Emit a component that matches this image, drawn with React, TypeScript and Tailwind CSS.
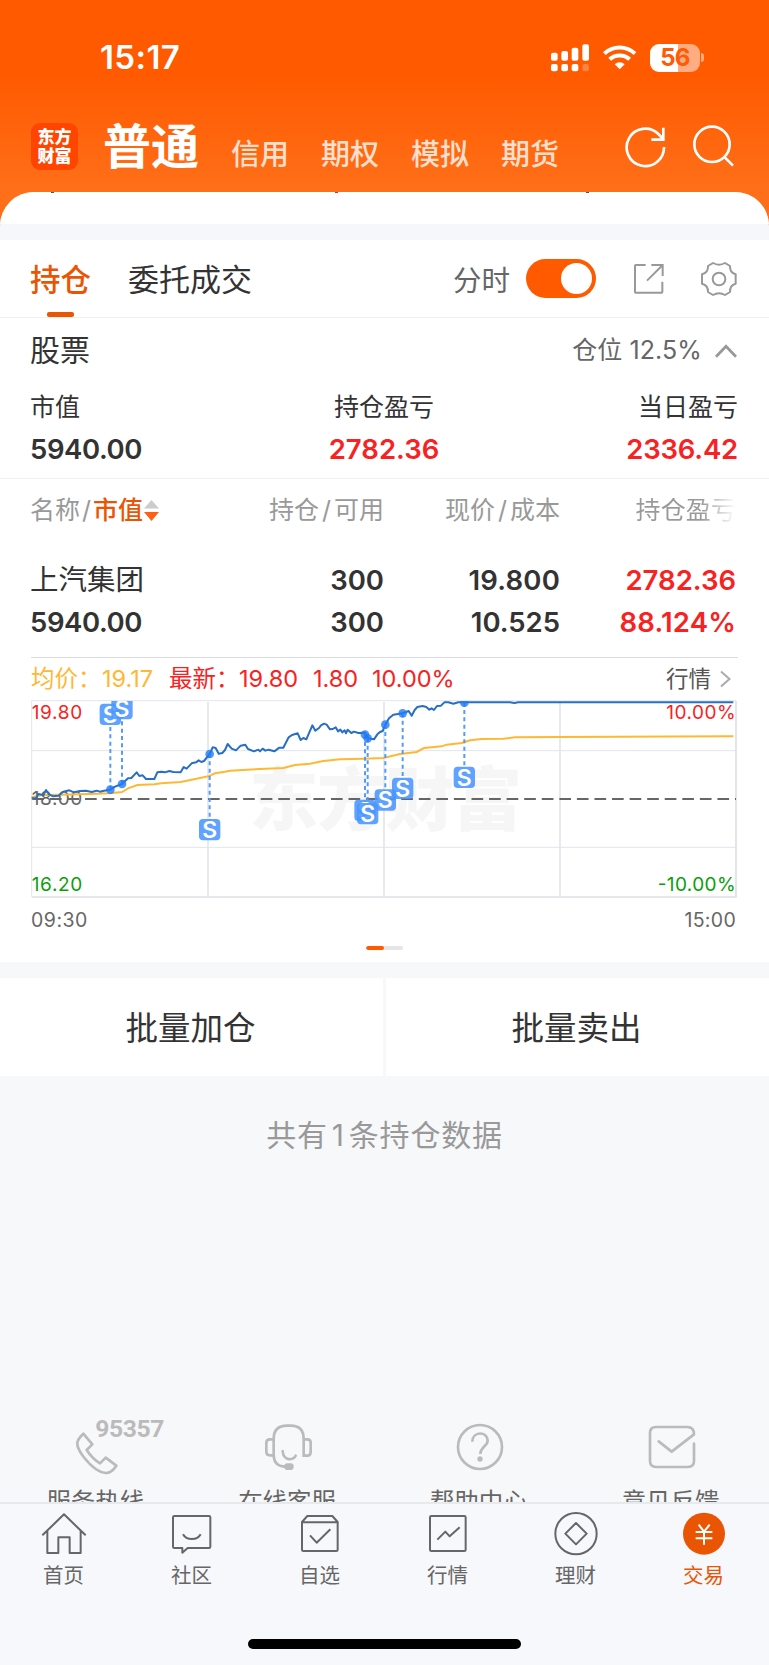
import React from "react";

interface Marker {
  x: number;
  dot: number;
  label: number;
}

const accountTabs = ["信用", "期权", "模拟", "期货"];

// chart units are thirds of a pixel
const priceLine =
  "95,325 108,325 115,312 130,316 138,300 147,313 160,319 175,317 190,305 208,301 222,307 240,303 258,302 275,306 290,302 300,305 312,302 331,299 345,290 366,282 384,265 394,264 410,247 418,258 428,256 438,267 463,267 472,247 484,245 495,247 508,243 520,246 542,247 551,231 560,236 575,220 588,217 596,211 604,216 612,213 629,192 638,172 647,174 656,191 667,189 675,180 683,162 695,176 708,181 722,167 736,164 744,177 762,184 775,179 780,184 788,176 796,182 806,179 823,184 838,173 850,173 866,142 876,135 893,130 902,150 910,144 919,148 937,106 946,122 957,114 963,106 972,101 980,104 990,118 998,117 1007,112 1014,124 1021,119 1027,127 1034,121 1038,130 1043,119 1054,129 1062,125 1075,129 1095,128 1104,145 1122,148 1132,133 1140,126 1148,123 1156,104 1167,85 1180,74 1208,70 1226,63 1235,77 1244,60 1252,51 1268,48 1279,51 1288,59 1295,55 1302,60 1311,48 1323,47 1333,37 1345,37 1360,41 1375,37 1530,37 1543,39 1555,37 2200,37";

const averageLine =
  "95,322 125,315 180,314 270,312 330,310 366,306 384,295 412,285 463,283 484,280 542,276 575,269 625,259 645,250 675,245 690,242 780,237 850,234 885,225 930,221 970,213 1020,208 1090,206 1150,204 1200,192 1250,186 1272,174 1325,169 1340,164 1385,159 1410,151 1445,147 1510,146 1545,142 1680,141 2200,139";

const markers: Marker[] = [
  { x: 331, dot: 299, label: 73 },
  { x: 366, dot: 282, label: 56 },
  { x: 629, dot: 192, label: 419 },
  { x: 1095, dot: 134, label: 361 },
  { x: 1103, dot: 145, label: 371 },
  { x: 1156, dot: 104, label: 330 },
  { x: 1208, dot: 70, label: 295 },
  { x: 1393, dot: 38, label: 262 },
];

const StatusBar = () => (
  <div className="flex h-[115px] items-center justify-between pl-[100px] pr-[65px] text-white">
    <span className="text-[33px] font-semibold leading-none tracking-[0.4px]">15:17</span>
    <div className="flex items-center">
      <svg className="h-[28px] w-[39px]" viewBox="0 0 117 84" fill="#fff">
        <rect x="0" y="26" width="20" height="24" rx="6" />
        <rect x="31" y="21" width="20" height="29" rx="6" />
        <rect x="62" y="11" width="20" height="39" rx="6" />
        <rect x="94" y="1" width="20" height="49" rx="6" />
        <rect x="0" y="60" width="20" height="22" rx="6" />
        <rect x="31" y="60" width="20" height="22" rx="6" />
        <rect x="62" y="60" width="20" height="22" rx="6" />
        <rect x="94" y="60" width="20" height="22" rx="6" opacity="0.25" />
      </svg>
      <svg className="ml-[13px] h-[25px] w-[34px]" viewBox="0 0 102 75" fill="none" stroke="#fff" strokeWidth="12">
        <path d="M4 26a67 67 0 0 1 92 0" />
        <path d="M20 43a44 44 0 0 1 60 0" />
        <path d="M50 73 35 58a22 22 0 0 1 30 0z" fill="#fff" stroke="none" />
      </svg>
      <div className="ml-[13px] flex items-center">
        <div className="flex h-[28px] w-[50px] items-center justify-center rounded-[9px] bg-[linear-gradient(90deg,#fff_56%,#ffac81_56%)]">
          <span className="text-[24px] font-bold leading-none tracking-[-0.8px] text-[#ff5a05]">56</span>
        </div>
        <div className="ml-px h-[9px] w-[3px] rounded-r-full bg-[#ffac81]" />
      </div>
    </div>
  </div>
);

const TopNav = () => (
  <div className="flex h-[77px] pl-[31px] text-white">
    <div className="mt-2 flex h-[47px] w-[47px] flex-col items-center justify-center rounded-[9px] bg-[#ff4500]">
      <span className="text-[17px] font-black leading-[19px]">东方</span>
      <span className="text-[17px] font-black leading-[19px]">财富</span>
    </div>
    <h1 className="ml-[25px] mt-2 text-[48px] font-bold leading-[48px]">普通</h1>
    <div className="ml-8 mt-[25px] flex gap-8 text-[29px] font-medium leading-[30px] text-[#ffe0cf]">
      {accountTabs.map((tab) => (
        <span key={tab}>{tab}</span>
      ))}
    </div>
    <svg className="ml-[65px] mt-[11px] h-[42px] w-[42px]" viewBox="717 378 126 126" fill="none" stroke="#fff" strokeWidth="8">
      {/* open ring, arrow head in the upper right corner */}
      <path d="M837 441a56 56 0 1 1-17-39l15 15" />
      <path d="M835 383v36h-36" />
    </svg>
    <svg className="ml-[26px] mt-[10px] h-[42px] w-[42px]" viewBox="922 375 126 126" fill="none" stroke="#fff" strokeWidth="8">
      <circle cx="982" cy="433" r="53" />
      <path d="M1018 470l27 27" />
    </svg>
  </div>
);

const HoldingTabs = () => (
  <div className="flex h-[78px] items-start border-b border-[#f0f0f0] bg-white pl-[30px]">
    <div className="flex h-[77px] flex-col items-center justify-between">
      <span className="mt-[25px] text-[30.5px] font-medium leading-[30px] text-[#ea5504]">持仓</span>
      <div className="h-[5px] w-[27px] rounded-[2px] bg-[#ea5504]" />
    </div>
    <span className="ml-[37px] mt-[25px] text-[31px] leading-[30px] text-[#333]">委托成交</span>
    <span className="ml-[201px] mt-[26px] text-[28.5px] leading-[30px] text-[#666]">分时</span>
    <div className="ml-4 mt-[19px] flex h-[39px] w-[70px] items-center justify-end rounded-full bg-[#ff5a00] pr-1">
      <div className="h-[31px] w-[31px] rounded-full bg-white" />
    </div>
    <svg className="ml-[37px] mt-[23px] h-[32px] w-[32px]" viewBox="744 69 96 96" fill="none" stroke="#999" strokeWidth="6">
      <path d="M782 75h-30a2 2 0 0 0-2 2v79a2 2 0 0 0 2 2h78a2 2 0 0 0 2-2v-31M799 75h34v33M833 75l-47 47" />
    </svg>
    <svg className="ml-[35px] mt-[21px] h-[36px] w-[38px]" viewBox="945 63 114 108" fill="none" stroke="#999" strokeWidth="6" strokeLinejoin="round">
      <circle cx="1002" cy="117" r="19" />
      <path d="M984 69Q1002 79 1020 69L1035 78Q1034 98 1052 103V131Q1034 136 1035 156L1020 165Q1002 155 984 165L969 156Q970 136 951 131V103Q970 98 969 78Z" />
    </svg>
  </div>
);

const Summary = () => (
  <div className="border-b border-[#f0f0f0] pl-[30px] pr-[31px] text-[#333]">
    <div className="flex h-[63px] items-center justify-between">
      <span className="text-[30px] leading-[30px]">股票</span>
      <div className="flex items-center pt-[2px] text-[25px] text-[#666]">
        <span className="tracking-[0.1px]">仓位 12.5%</span>
        <svg className="ml-[13px] mr-px h-[14px] w-[22px]" viewBox="0 0 23 14" fill="none" stroke="#999" strokeWidth="3">
          <path d="M1 13 11.500 2 22 13" />
        </svg>
      </div>
    </div>
    <div className="grid h-[97px] grid-cols-3 text-[25px]">
      <div className="flex flex-col items-start">
        <span className="mt-[14px] leading-[25px]">市值</span>
        <span className="mt-[15px] text-[27.5px] font-semibold leading-[28px] tracking-[-0.4px]">5940.00</span>
      </div>
      <div className="flex flex-col items-center">
        <span className="mt-[14px] leading-[25px]">持仓盈亏</span>
        <span className="mt-[15px] text-[27.5px] font-semibold leading-[28px] text-[#f82222]">2782.36</span>
      </div>
      <div className="flex flex-col items-end">
        <span className="mt-[14px] leading-[25px]">当日盈亏</span>
        <span className="mt-[15px] text-[27.5px] font-semibold leading-[28px] tracking-[-0.2px] text-[#f82222]">2336.42</span>
      </div>
    </div>
  </div>
);

const Position = () => (
  <div className="pl-[30px] pr-[33px]">
    <div className="grid h-[62px] grid-cols-[177px_177px_176px_1fr] items-center text-[25px] leading-[25px] text-[#999]">
      <div className="flex items-center">
        名称<span className="px-[2px]">/</span>
        <span className="font-medium text-[#ea5504]">市值</span>
        <svg className="ml-px h-[21px] w-[15px] shrink-0" viewBox="0 0 15 21">
          <path d="M0 8.500H15L7.500 0z" fill="#ccc" />
          <path d="M0 12H15L7.500 21z" fill="#ff5f10" />
        </svg>
      </div>
      <span className="text-right">持仓<span className="px-[3px]">/</span>可用</span>
      <span className="text-right">现价<span className="px-[3px]">/</span>成本</span>
      <span className="bg-[linear-gradient(90deg,#999_80%,#fff)] bg-clip-text text-right tracking-[0.1px] text-transparent">持仓盈亏</span>
    </div>
    <div className="grid h-[116px] grid-cols-[177px_177px_176px_1fr] content-start gap-y-[14px] pt-[25px] text-right text-[27.5px] font-semibold leading-[28px] text-[#333]">
      <span className="text-left text-[28.5px] font-normal">上汽集团</span>
      <span>300</span>
      <span className="tracking-[0.2px]">19.800</span>
      <span className="text-[#f82222]">2782.36</span>
      <span className="text-left tracking-[-0.4px]">5940.00</span>
      <span>300</span>
      <span>10.525</span>
      <span className="tracking-[0.2px] text-[#f82222]">88.124%</span>
    </div>
  </div>
);

const Chart = () => (
  <svg className="block h-[199px] w-[706px]" viewBox="93 30 2118 597">
    <defs>
      <clipPath id="plot">
        <rect x="93" y="33" width="2118" height="594" />
      </clipPath>
    </defs>
    <g stroke="#e1e5ee" fill="none">
      <path d="M95 182H2208M95 472H2208" strokeWidth="3" />
      <path d="M624 36V617M1152 36V617M1680 36V617" strokeWidth="5" />
      <path d="M95 620V32H2208" strokeWidth="3" />
      <path d="M95 621H2208V32" stroke="#dce1e8" strokeWidth="5" />
    </g>
    <text x="748" y="405" textLength="818" fontSize="207" fontWeight="900" fill="#f6f6f6">东方财富</text>
    <path d="M97 327H2208" stroke="#666" strokeWidth="6" strokeDasharray="35 17.700" />
    <g fontSize="57">
      <text x="95" y="87" textLength="152" fill="#f82222">19.80</text>
      <text x="95" y="346" textLength="152" fill="#666">18.00</text>
      <text x="95" y="602" textLength="152" fill="#0a9e0a">16.20</text>
      <text x="2207" y="87" textAnchor="end" textLength="208" fill="#f82222">10.00%</text>
      <text x="2207" y="602" textAnchor="end" textLength="234" fill="#0a9e0a">-10.00%</text>
    </g>
    <g clipPath="url(#plot)">
      <polyline points={averageLine} fill="none" stroke="#ffb833" strokeWidth="6" />
      <polyline points={priceLine} fill="none" stroke="#286fc4" strokeWidth="6" strokeLinejoin="round" />
      {markers.map((m) => (
        <g key={m.x}>
          <path d={`M${m.x} ${m.dot}V${m.label}`} stroke="#559bf5" strokeWidth="6" strokeDasharray="12 10" />
          <circle cx={m.x} cy={m.dot} r="13" fill="#1f7bf7" fillOpacity="0.8" />
          <rect x={m.x - 32} y={m.label - 32} width="64" height="64" rx="12" fill="#4a95ff" fillOpacity="0.88" />
          <text x={m.x} y={m.label + 25} textAnchor="middle" fontSize="69" fontWeight="600" fill="#fff">S</text>
        </g>
      ))}
    </g>
  </svg>
);

const ChartPanel = () => (
  <div className="mx-[31px] h-[305px] border-t border-[#ddd]">
    <div className="flex h-[42px] items-center whitespace-nowrap text-[23.5px] leading-[24px] text-[#f82222]">
      <span className="w-[71px] text-[#ffb833]">均价：</span>
      <span className="w-[67px] text-[#ffb833]">19.17</span>
      <span className="w-[70px]">最新：</span>
      <span className="w-[74px]">19.80</span>
      <span className="w-[59px]">1.80</span>
      <span>10.00%</span>
      <span className="ml-auto text-[22.5px] text-[#555]">行情</span>
      <svg className="ml-[9px] mr-[7px] h-[18px] w-[11px]" viewBox="0 0 11 18" fill="none" stroke="#aaa" strokeWidth="2">
        <path d="M1 1.500 9.500 9 1 16.500" />
      </svg>
    </div>
    <Chart />
    <div className="flex h-[44px] items-center justify-between pr-[2px] text-[19.5px] text-[#666]">
      <span className="tracking-[0.5px]">09:30</span>
      <span className="tracking-[0.3px]">15:00</span>
    </div>
    <div className="mx-auto mt-[3px] flex h-[4px] w-[37px] overflow-hidden rounded-full bg-[#e5e5e5]">
      <div className="w-[18px] rounded-full bg-[#ff5a00]" />
    </div>
  </div>
);

const services = [
  {
    name: "服务热线",
    icon: (
      <svg className="ml-[75px] h-[58px] w-[92px]" viewBox="225 55 276 174" fill="none" stroke="#bbb" strokeWidth="8" strokeLinejoin="round">
        <path d="M250 102 L277 134 L260 151 Q277 177 300 191 L317 174 L349 198 Q335 220 318 220 Q287 218 251 172 Q230 145 232 128 Q235 116 250 102Z" />
        <text x="286" y="113" textLength="207" fontSize="74" fontWeight="700" fill="#bbb" stroke="none" className="font-['Roboto',sans-serif]">95357</text>
      </svg>
    ),
  },
  {
    name: "在线客服",
    icon: (
      <svg className="ml-[72px] h-[58px] w-[50px]" viewBox="792 55 150 174" fill="none" stroke="#bbb" strokeWidth="8">
        <path d="M821 166V118Q821 78 861 78H872Q911 78 911 118V168H922Q932 168 932 158V129Q932 119 922 119H911M821 119H810Q799 119 799 130V157Q799 167 810 167H821Q822 201 857 201" />
        <path d="M848 154C850 184 880 184 887 168" strokeLinecap="round" />
        <rect x="853" y="191" width="28" height="20" rx="9" fill="#bbb" stroke="none" />
      </svg>
    ),
  },
  {
    name: "帮助中心",
    icon: (
      <svg className="ml-[71px] h-[58px] w-[50px]" viewBox="210 55 150 174" fill="none" stroke="#bbb" strokeWidth="8">
        <circle cx="285" cy="142" r="66" />
        <path d="M262 126C262 94 308 94 308 123C308 139 286 141 286 163" />
        <circle cx="285" cy="178" r="8" fill="#bbb" stroke="none" />
      </svg>
    ),
  },
  {
    name: "意见反馈",
    icon: (
      <svg className="ml-[72px] h-[58px] w-[50px]" viewBox="787 55 150 174" fill="none" stroke="#bbb" strokeWidth="8" strokeLinejoin="round">
        <path d="M928 132V184Q928 202 910 202H814Q796 202 796 184V100Q796 82 814 82H908Q928 82 928 104L861 156 822 125" strokeLinecap="round" />
      </svg>
    ),
  },
];

const Services = () => (
  <div className="grid h-[84px] w-[767px] grid-cols-4 overflow-hidden">
    {services.map((s) => (
      <div key={s.name}>
        {s.icon}
        <p className="mt-[14px] pr-px text-center text-[24.5px] leading-[25px] text-[#666]">{s.name}</p>
      </div>
    ))}
  </div>
);

const bottomTabs = [
  {
    name: "首页",
    icon: <path d="M-65 4 0-59 65 4M-50-9V57H-17V10H17V57H50V-9" />,
  },
  {
    name: "社区",
    icon: (
      <>
        <path d="M-53-54H51Q55-54 55-50V38Q55 42 51 42H-13L-29 56V42H-53Q-57 42-57 38V-50Q-57-54-53-54Z" />
        <path d="M-27 1C-17 20 16 20 26 1" />
      </>
    ),
  },
  {
    name: "自选",
    icon: <path d="M-54-36-38-54H37L53-36V47Q53 51 49 51H-50Q-54 51-54 47ZM-54-35H53M-30 4-10 26 31-14" />,
  },
  {
    name: "行情",
    icon: <path d="M-50-54H49Q53-54 53-50V47Q53 51 49 51H-50Q-54 51-54 47V-50Q-54-54-50-54ZM-32 17-8-7 5 7 35-20" />,
  },
  {
    name: "理财",
    icon: (
      <>
        <circle cx="0" cy="-1" r="62" />
        <path d="M0-33 32-1 0 31-32-1Z" />
      </>
    ),
  },
  {
    name: "交易",
    active: true,
    icon: (
      <>
        <circle cx="0" cy="-1" r="63" fill="#ea5504" stroke="none" />
        <path d="M-16-28 0-7 17-28M0-7V32M-25-6H25M-25 13H25" stroke="#fff" />
      </>
    ),
  },
];

const BottomBar = () => (
  <nav className="flex h-[163px] flex-col items-center border-t-2 border-[#e8e9ec] bg-[#f7f8fb]">
    <div className="grid w-[768px] grid-cols-6 self-start">
      {bottomTabs.map((tab) => (
        <div key={tab.name} className="flex flex-col items-center pt-[7px]">
          <svg className="h-[46px] w-[46px]" viewBox="-69 -69 138 138" fill="none" stroke="#666" strokeWidth="6" strokeLinejoin="round">
            {tab.icon}
          </svg>
          <span className={tab.active ? "mt-2 pr-px text-[20.5px] leading-[22px] text-[#ea5504]" : "mt-2 pr-px text-[20.5px] leading-[22px] text-[#666]"}>
            {tab.name}
          </span>
        </div>
      ))}
    </div>
    <div className="mt-[52px] h-[10px] w-[273px] rounded-full bg-black" />
  </nav>
);

export default function App() {
  return (
    <div className="flex h-[1665px] w-[769px] flex-col overflow-hidden bg-[#f7f8fa] bg-[linear-gradient(180deg,#ff5a00_0px,#ff5a00_75px,#ff6f19_190px,#ff6f19_240px,#f7f8fa_240px)] font-['Inter','Noto_Sans_CJK_SC',sans-serif]">
      <StatusBar />
      <TopNav />
      <div className="flex h-[48px] flex-col overflow-hidden rounded-t-[34px] bg-[#f6f7fa]">
        <div className="flex h-[32px] bg-white">
          <div className="ml-[51px] h-px w-[3px] bg-[#555]" />
          <div className="ml-[281px] h-px w-[3px] bg-[#f82222]" />
          <div className="ml-[248px] h-px w-[3px] bg-[#555]" />
        </div>
      </div>
      <HoldingTabs />
      <div className="h-[644px] bg-white">
        <Summary />
        <Position />
        <ChartPanel />
      </div>
      <div className="mt-4 grid h-[98px] grid-cols-2 gap-[3px] text-[32.5px] text-[#333]">
        <div className="flex items-center justify-center bg-white pr-[2px] pt-[5px]">批量加仓</div>
        <div className="flex items-center justify-center bg-white pr-[2px] pt-[5px]">批量卖出</div>
      </div>
      <p className="mt-[44px] text-center text-[30px] leading-[30px] tracking-[0.8px] text-[#999]">
        共有<span className="px-[4px]">1</span>条持仓数据
      </p>
      <div className="mt-auto">
        <Services />
        <BottomBar />
      </div>
    </div>
  );
}
